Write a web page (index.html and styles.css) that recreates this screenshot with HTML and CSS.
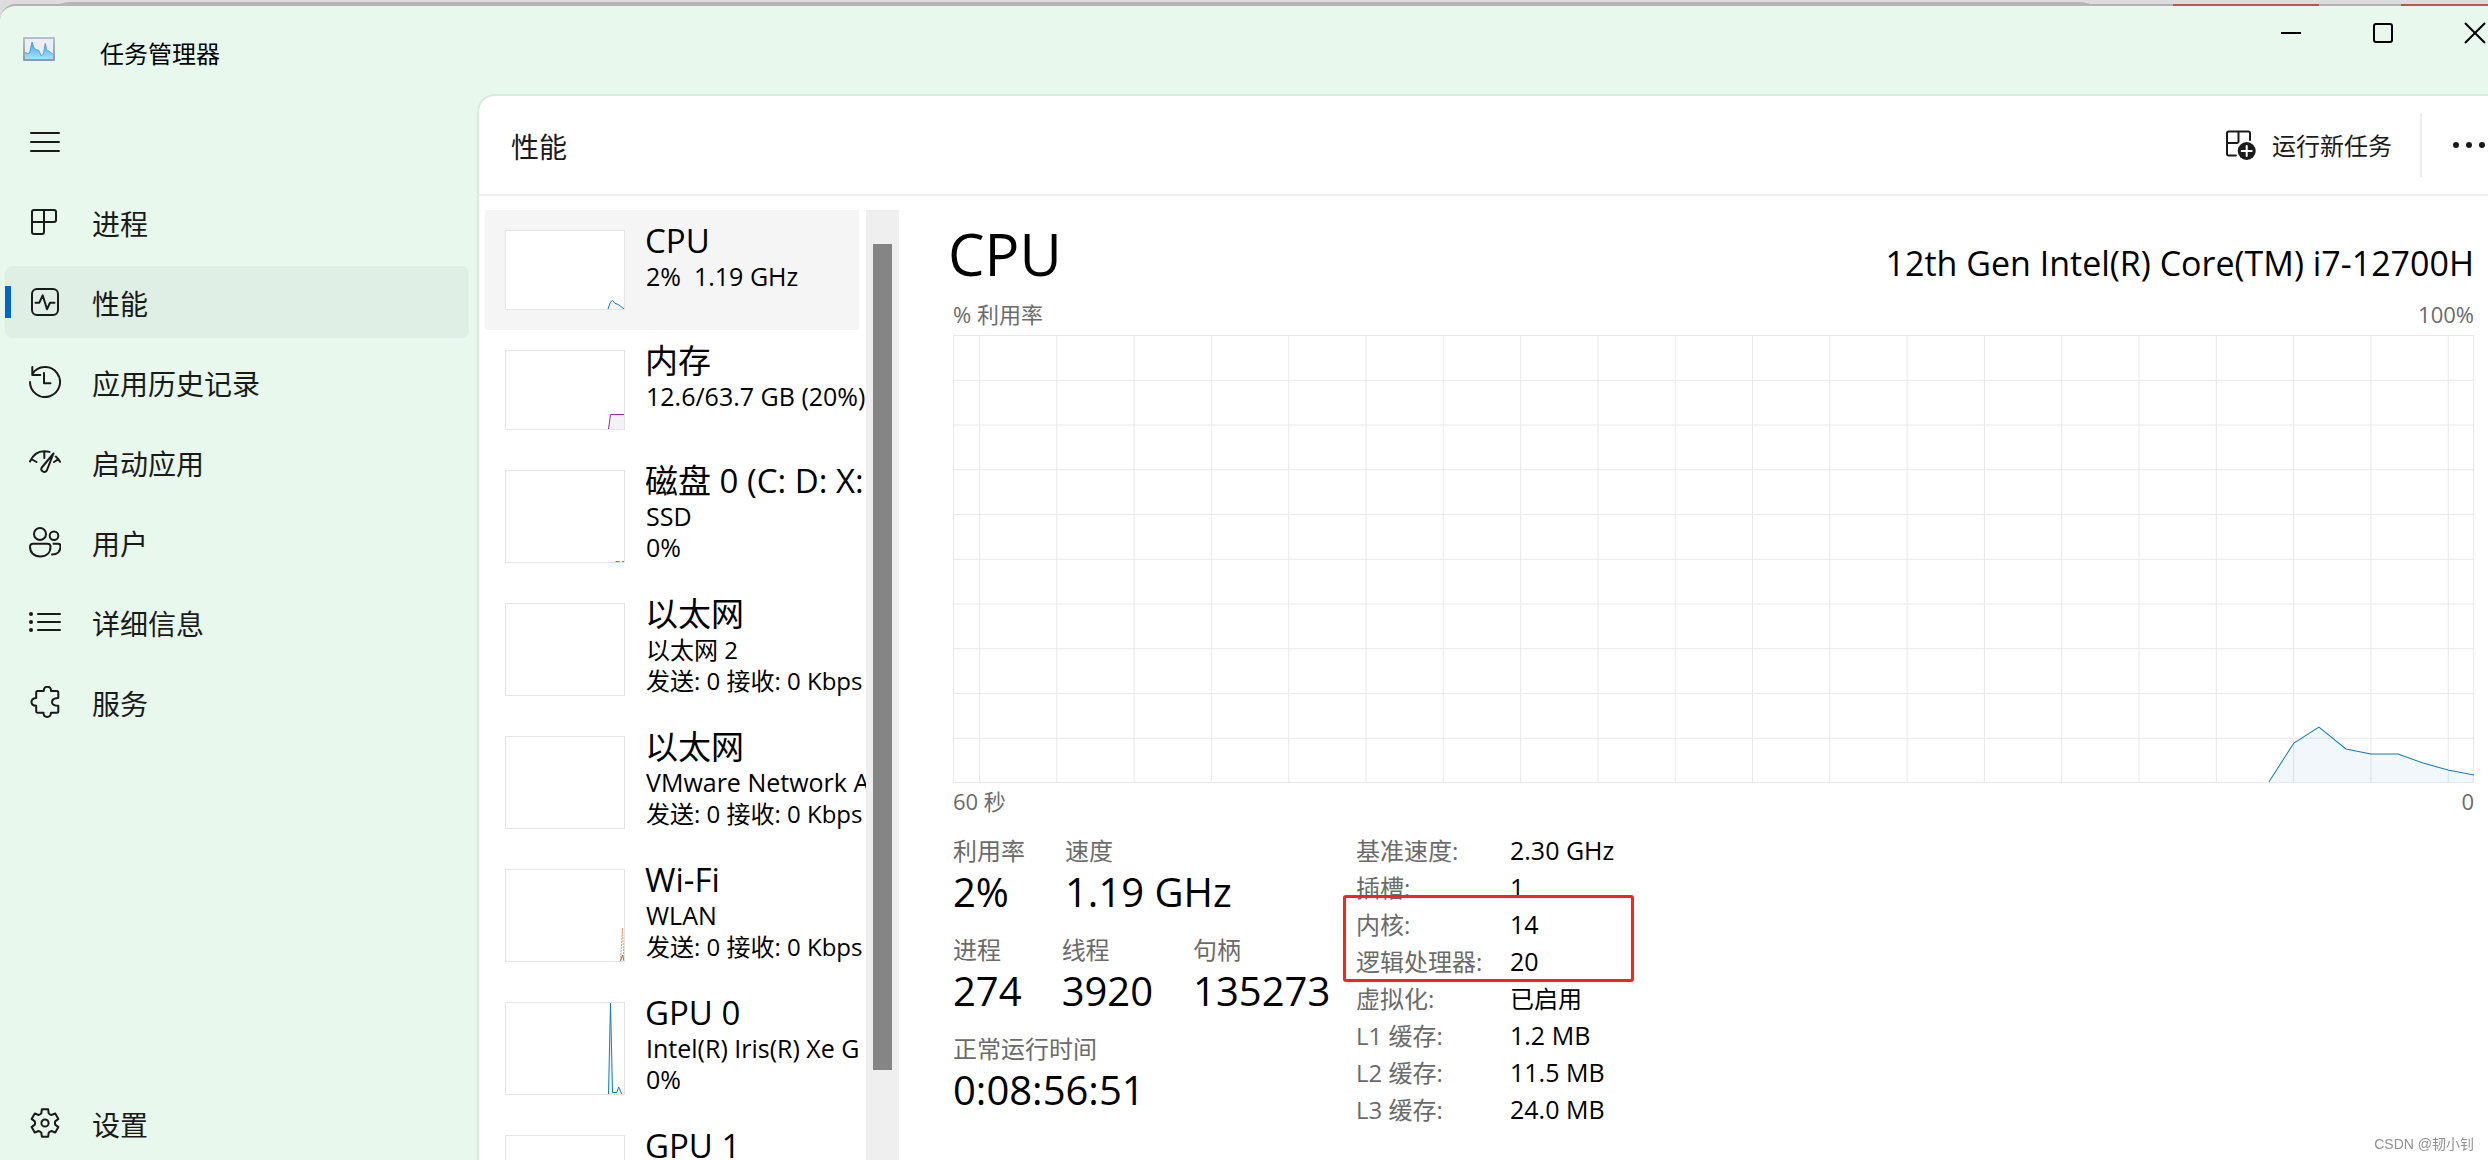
FILE: index.html
```html
<!DOCTYPE html>
<html lang="zh-CN">
<head>
<meta charset="utf-8">
<meta name="viewport" content="width=device-width, initial-scale=1">
<title>任务管理器</title>
<link rel="stylesheet" href="styles.css">
</head>
<body>
<div class="backdrop" aria-hidden="true">
  <span class="backdrop-tab"></span>
  <span class="backdrop-mark"></span>
  <span class="backdrop-mark backdrop-mark-end"></span>
</div>
<div class="window">
  <header class="titlebar">
    <svg class="app-icon" viewBox="0 0 32 24" aria-hidden="true">
      <defs>
        <linearGradient id="app-frame" x1="0" y1="0" x2="0" y2="1"><stop offset="0" stop-color="#b4c0cc"/><stop offset="1" stop-color="#8f99a8"/></linearGradient>
        <linearGradient id="app-fill" x1="0" y1="0" x2="0" y2="1"><stop offset="0" stop-color="#3da5ea"/><stop offset="1" stop-color="#a4e2fb"/></linearGradient>
      </defs>
      <rect width="32" height="24" rx="1" fill="url(#app-frame)"/>
      <rect x="2" y="2" width="28" height="20" fill="#eceef3"/>
      <path d="M2 15.500 5 16.500 6.500 16 9 5l2.300 6.300 2 1.200 2.500.8L18.300 19l2-2 2-10.700L24 13.700l2 .5 4 3V22H2z" fill="url(#app-fill)"/>
      <path d="M2 15.500 5 16.500 6.500 16 9 5l2.300 6.300 2 1.200 2.500.8L18.300 19l2-2 2-10.700L24 13.700l2 .5 4 3" fill="none" stroke="#3a9be0" stroke-width=".8"/>
    </svg>
    <h1 class="app-title">任务管理器</h1>
    <div class="window-controls">
      <button class="window-button" type="button" aria-label="最小化"><svg viewBox="0 0 24 24"><path d="M2 12h20"/></svg></button>
      <button class="window-button" type="button" aria-label="最大化"><svg viewBox="0 0 24 24"><rect x="3" y="3" width="18" height="18" rx="2"/></svg></button>
      <button class="window-button" type="button" aria-label="关闭"><svg viewBox="0 0 24 24"><path d="M2 2l20 20M22 2 2 22"/></svg></button>
    </div>
  </header>

  <div class="body">
    <nav class="sidebar">
      <button class="nav-item nav-menu" type="button" aria-label="菜单"><svg class="icon" viewBox="0 0 32 32"><path d="M2 7h28M2 16h28M2 25h28"/></svg></button>
      <button class="nav-item" type="button"><svg class="icon" viewBox="0 0 32 32"><path d="M5 4h20a2 2 0 0 1 2 2v8a2 2 0 0 1-2 2H15v10a2 2 0 0 1-2 2H5a2 2 0 0 1-2-2V6a2 2 0 0 1 2-2zM15 4v12M3 16h12"/></svg><span>进程</span></button>
      <button class="nav-item nav-selected" type="button" aria-current="page"><svg class="icon" viewBox="0 0 32 32"><rect x="3" y="3" width="26" height="26" rx="5"/><path d="M6.500 16.700h3.800l3.400-7.400L18 23.300l3-6.600h4.500"/></svg><span>性能</span></button>
      <button class="nav-item" type="button"><svg class="icon" viewBox="0 0 32 32"><path d="M1 16A15 15 0 1 0 3.500 7.700M3.300 1v8h8M15 7v10.300h6.500"/></svg><span>应用历史记录</span></button>
      <button class="nav-item" type="button"><svg class="icon" viewBox="0 0 32 32"><path d="M1 15.500C4 9 9 5.300 15 5.300q3 0 5.500.6M3 13.500l4.500 2.500M15.300 6v6M26.800 10.500q2.500 2 4.200 5.300M29.500 13.200 25 16M24.500 7.500 12.800 21.500a2.800 2.800 0 0 0 5 3z"/></svg><span>启动应用</span></button>
      <button class="nav-item" type="button"><svg class="icon" viewBox="0 0 32 32"><circle cx="11" cy="8" r="6"/><circle cx="25" cy="9.700" r="4.300"/><path d="M4 17.700h14.500a3 3 0 0 1 3 3c0 6-4 9.800-10.300 9.800S1 26.500 1 20.700a3 3 0 0 1 3-3zM24.500 17.700H29a2.500 2.500 0 0 1 2.500 2.500c0 5-3 8.300-8.500 8.300"/></svg><span>用户</span></button>
      <button class="nav-item" type="button"><svg class="icon" viewBox="0 0 32 32"><path d="M9 8h22M9 16h22M9 24h22"/><g class="solid"><circle cx="2" cy="8" r="2"/><circle cx="2" cy="16" r="2"/><circle cx="2" cy="24" r="2"/></g></svg><span>详细信息</span></button>
      <button class="nav-item" type="button"><svg class="icon" viewBox="0 0 32 32"><path d="M8.700 5h6.100q-.2-4.200 3.600-4.200T22 5h5.800a1.500 1.500 0 0 1 1.500 1.500V12q-6.300.2-6.300 3.900t6.300 3.900v5.400a1.500 1.500 0 0 1-1.500 1.500H22q-.2 4.200-3.800 4.200t-3.700-4.200H8.700a1.500 1.500 0 0 1-1.500-1.500v-5.400q-4.700-.4-4.700-3.900T7.200 12V6.500A1.500 1.500 0 0 1 8.700 5z"/></svg><span>服务</span></button>
      <button class="nav-item nav-settings" type="button"><svg class="icon" viewBox="-16 -16 32 32"><circle r="3.600"/><path d="M-3.150-13.640H3.150L3.690-9.620Q5-8.300 6.480-8L10.240-9.550 13.390-4.090 10.170-1.610Q9.700 0 10.170 1.610L13.390 4.090 10.240 9.550 6.480 8Q5 8.300 3.690 9.620L3.150 13.640H-3.150L-3.690 9.620Q-5 8.300-6.480 8L-10.240 9.550-13.390 4.090-10.170 1.610Q-9.700 0-10.170-1.610L-13.390-4.090-10.240-9.550-6.480-8Q-5-8.300-3.690-9.620z"/></svg><span>设置</span></button>
    </nav>

    <main class="page">
      <header class="page-header">
        <h2 class="page-title">性能</h2>
        <button class="run-task" type="button">
          <svg class="icon" viewBox="0 0 32 32"><path d="M25 11V4a1.500 1.500 0 0 0-1.500-1.500h-20A1.500 1.500 0 0 0 2 4v21a1.500 1.500 0 0 0 1.500 1.500H11M13.500 2.500v10A1.500 1.500 0 0 1 12 14H2"/><circle class="solid" cx="21.700" cy="22" r="9"/><path class="plus" d="M21.700 17v10M16.700 22h10"/></svg>
          <span>运行新任务</span>
        </button>
        <button class="more" type="button" aria-label="更多选项"><svg viewBox="0 0 32 8"><circle cx="3" cy="4" r="3"/><circle cx="16" cy="4" r="3"/><circle cx="29" cy="4" r="3"/></svg></button>
      </header>

      <div class="performance">
        <ul class="devices">
          <li><button class="device device-selected" type="button">
            <svg class="thumb thumb-blue" viewBox="1 1 118 78"><path class="area" d="M103 79 105 73l2.300-2.700L110 73.300l3.700 1.400L119 79z"/><path d="M103 79 105 73l2.300-2.700L110 73.300l3.700 1.400L119 79"/></svg>
            <span class="device-text"><span class="device-name">CPU</span><span class="device-info" lang="en">2%&nbsp; 1.19 GHz</span></span></button></li>
          <li><button class="device" type="button">
            <svg class="thumb thumb-purple" viewBox="1 1 118 78"><path class="area" d="M103.500 79l2-14.500H119V79z"/><path d="M103.500 79l2-14.500H119"/></svg>
            <span class="device-text"><span class="device-name">内存</span><span class="device-info" lang="en">12.6/63.7 GB (20%)</span></span></button></li>
          <li><button class="device" type="button">
            <svg class="thumb thumb-tall thumb-green" viewBox="1 1 118 91"><path d="M110.500 91.500h4M117 91.500h2"/></svg>
            <span class="device-text"><span class="device-name">磁盘 0 (C: D: X:</span><span class="device-info" lang="en">SSD</span><span class="device-info" lang="en">0%</span></span></button></li>
          <li><button class="device" type="button">
            <svg class="thumb thumb-tall" viewBox="1 1 118 91"></svg>
            <span class="device-text"><span class="device-name">以太网</span><span class="device-info">以太网 2</span><span class="device-info">发送: 0 接收: 0 Kbps</span></span></button></li>
          <li><button class="device" type="button">
            <svg class="thumb thumb-tall" viewBox="1 1 118 91"></svg>
            <span class="device-text"><span class="device-name">以太网</span><span class="device-info" lang="en">VMware Network A</span><span class="device-info">发送: 0 接收: 0 Kbps</span></span></button></li>
          <li><button class="device" type="button">
            <svg class="thumb thumb-tall thumb-orange" viewBox="1 1 118 91"><path class="dotted" d="M115.500 92l2-33 1.500 33"/><path d="M115.500 92l2-6 1.500 6"/></svg>
            <span class="device-text"><span class="device-name">Wi-Fi</span><span class="device-info" lang="en">WLAN</span><span class="device-info">发送: 0 接收: 0 Kbps</span></span></button></li>
          <li><button class="device" type="button">
            <svg class="thumb thumb-tall thumb-blue" viewBox="1 1 118 91"><path class="area" d="M103.500 92l2-92 2 90.500h4.200l2-5.500 3 7z"/><path d="M103.500 92l2-92 2 90.500h4.200l2-5.500 3 7"/></svg>
            <span class="device-text"><span class="device-name">GPU 0</span><span class="device-info" lang="en">Intel(R) Iris(R) Xe G</span><span class="device-info" lang="en">0%</span></span></button></li>
          <li><button class="device" type="button">
            <svg class="thumb thumb-tall" viewBox="1 1 118 91"></svg>
            <span class="device-text"><span class="device-name">GPU 1</span></span></button></li>
        </ul>
        <div class="scrollbar" aria-hidden="true"><div class="scrollbar-thumb"></div></div>

        <section class="cpu">
          <header class="cpu-header"><h3 class="cpu-title">CPU</h3><p class="cpu-model">12th Gen Intel(R) Core(TM) i7-12700H</p></header>
          <div class="axis axis-top"><span>% 利用率</span><span>100%</span></div>
          <svg class="chart" viewBox="0 0 1520 448" preserveAspectRatio="none" role="img" aria-label="CPU 利用率">
            <defs>
              <pattern id="grid-columns" x="26" width="77.250" height="448" patternUnits="userSpaceOnUse"><path d="M.5 0v448"/></pattern>
              <pattern id="grid-rows" width="1520" height="44.750" patternUnits="userSpaceOnUse"><path d="M0 .5h1520"/></pattern>
            </defs>
            <rect width="1520" height="448" fill="url(#grid-columns)"/>
            <rect width="1520" height="448" fill="url(#grid-rows)"/>
            <path class="frame" d="M.5.5h1519v447H.5z"/>
            <path class="usage-area" d="M1315 447l25-39 25-16 27 22 25 5h27l25 9 25 7 26 5v7z"/>
            <path class="usage-line" d="M1315 447l25-39 25-16 27 22 25 5h27l25 9 25 7 26 5"/>
          </svg>
          <div class="axis axis-bottom"><span>60 秒</span><span>0</span></div>

          <div class="facts">
            <div class="counters">
              <dl class="counter-row"><div><dt>利用率</dt><dd>2%</dd></div><div><dt>速度</dt><dd>1.19 GHz</dd></div></dl>
              <dl class="counter-row"><div><dt>进程</dt><dd>274</dd></div><div><dt>线程</dt><dd>3920</dd></div><div><dt>句柄</dt><dd>135273</dd></div></dl>
              <dl class="counter-row"><div><dt>正常运行时间</dt><dd>0:08:56:51</dd></div></dl>
            </div>
            <div class="specs">
              <table>
                <tr><th scope="row">基准速度:</th><td lang="en">2.30 GHz</td></tr>
                <tr><th scope="row">插槽:</th><td lang="en">1</td></tr>
                <tr><th scope="row">内核:</th><td lang="en">14</td></tr>
                <tr><th scope="row">逻辑处理器:</th><td lang="en">20</td></tr>
                <tr><th scope="row">虚拟化:</th><td>已启用</td></tr>
                <tr><th scope="row">L1 缓存:</th><td lang="en">1.2 MB</td></tr>
                <tr><th scope="row">L2 缓存:</th><td lang="en">11.5 MB</td></tr>
                <tr><th scope="row">L3 缓存:</th><td lang="en">24.0 MB</td></tr>
              </table>
              <div class="highlight"></div>
            </div>
          </div>
        </section>
      </div>
    </main>
  </div>
</div>
<div class="watermark">CSDN @韧小钊</div>
</body>
</html>
```

FILE: styles.css
```css
* {
  box-sizing: border-box;
}

body {
  margin: 0;
  height: 100vh;
  overflow: hidden;
  display: flex;
  flex-direction: column;
  background: #dcdcdc;
  color: #000;
  font-family: "Open Sans", "Noto Sans CJK SC", sans-serif;
  font-size: 24px;
}

h1, h2, h3, p, ul, dl, dd {
  margin: 0;
  padding: 0;
  font-weight: 400;
}

button {
  margin: 0;
  padding: 0;
  border: 0;
  background: none;
  color: inherit;
  font: inherit;
  text-align: left;
}

svg {
  display: block;
  flex: none;
}

/* Sliver of the windows behind */
.backdrop {
  flex: none;
  display: flex;
  align-items: flex-end;
  height: 6px;
  margin-bottom: -2px;
  padding-left: 58px;
  position: relative;
  z-index: 1;
}

.backdrop-tab {
  flex: none;
  width: 2034px;
  height: 4px;
  margin-right: 81px;
  border-radius: 14px 14px 0 0 / 4px 4px 0 0;
  background: #b5b5b5;
}

.backdrop-mark {
  flex: none;
  width: 146px;
  height: 2px;
  margin-right: 82px;
  background: #b8584a;
}

.backdrop-mark-end {
  flex: 1;
  margin-right: 0;
}

.window {
  flex: 1;
  min-height: 0;
  display: flex;
  flex-direction: column;
  border-top: 2px solid #b2b2b2;
  border-radius: 16px 0 0 0;
  background: #e8f8ed;
}

.titlebar {
  flex: none;
  display: flex;
  align-items: flex-start;
  height: 88px;
  padding-left: 23px;
}

.app-icon {
  width: 32px;
  height: 24px;
  margin-top: 31px;
}

.app-title {
  margin: 31px 0 0 45px;
  font-size: 24px;
  line-height: 34px;
}

.window-controls {
  display: flex;
  gap: 68px;
  margin: 15px 1px 0 auto;
}

.window-button svg {
  width: 24px;
  height: 24px;
  fill: none;
  stroke: #000;
  stroke-width: 2;
}

.body {
  flex: 1;
  min-height: 0;
  display: flex;
}

.icon {
  width: 32px;
  height: 32px;
  fill: none;
  stroke: #1a1a1a;
  stroke-width: 2;
  stroke-linecap: round;
  stroke-linejoin: round;
}

.icon .solid {
  fill: #1a1a1a;
  stroke: none;
}

.icon .plus {
  stroke: #fff;
}

/* Sidebar */
.sidebar {
  flex: none;
  width: 477px;
  display: flex;
  flex-direction: column;
  gap: 8px;
  padding: 12px 8px 1px 5px;
  color: #1a1a1a;
}

.nav-item {
  display: flex;
  align-items: center;
  gap: 31px;
  height: 72px;
  padding-left: 24px;
  border-radius: 8px;
  font-size: 28px;
}

.nav-item span {
  padding-top: 2px;
}

.nav-selected {
  background: linear-gradient(#0067c0, #0067c0) 0 20px / 6px 32px no-repeat #e0efe5;
}

.nav-settings {
  margin-top: auto;
}

/* Content page */
.page {
  flex: 1;
  min-width: 0;
  display: flex;
  flex-direction: column;
  border: solid #d9ebdf;
  border-width: 2px 0 0 2px;
  border-radius: 18px 0 0 0;
  background: #fff;
}

.page-header {
  flex: none;
  display: flex;
  align-items: center;
  height: 100px;
  padding: 0 3px 0 32px;
  border-bottom: 2px solid #efefef;
  color: #1a1a1a;
}

.page-title {
  flex: 1;
  padding-top: 2px;
  font-size: 28px;
}

.run-task {
  display: flex;
  align-items: center;
  gap: 15px;
  height: 64px;
  padding-right: 28px;
  border-right: 2px solid #ececec;
}

.run-task span {
  padding-bottom: 2px;
}

.more {
  padding-left: 31px;
}

.more svg {
  width: 32px;
  height: 8px;
  fill: #1a1a1a;
}

.performance {
  flex: 1;
  min-height: 0;
  display: flex;
  padding-top: 14px;
}

/* Device list */
.devices {
  flex: none;
  width: 387px;
  overflow: hidden;
  padding: 0 7px 0 6px;
  list-style: none;
}

.device {
  display: flex;
  width: 100%;
  padding: 20px 0 20px 20px;
  white-space: nowrap;
}

.device-selected {
  background: #f5f5f5;
}

.thumb {
  width: 120px;
  height: 80px;
  border: 1px solid #e4e4e4;
  background: #fff;
  fill: none;
  stroke-width: 1;
}

.thumb-tall {
  height: 93px;
}

.thumb-blue {
  stroke: #117dbb;
}

.thumb-purple {
  stroke: #9528b4;
}

.thumb-green {
  stroke: #4da60c;
}

.thumb-orange {
  stroke: #c0662c;
}

.thumb .area {
  fill: #f1f3f7;
  stroke: none;
}

.thumb .dotted {
  stroke: #ee9470;
  stroke-dasharray: 2 1;
}

.device-text {
  display: flex;
  flex-direction: column;
  height: 80px;
  margin: -9px 0 0 20px;
}

.device-name {
  font-size: 33px;
  line-height: 40px;
}

.device-info {
  padding-left: 1px;
  font-size: 24px;
  line-height: 31px;
}

.device-info:lang(en) {
  font-size: 25px;
}

.scrollbar {
  flex: none;
  width: 33px;
  padding: 34px 7px 90px;
  background: #efefef;
}

.scrollbar-thumb {
  height: 100%;
  background: #858585;
}

/* CPU details */
.cpu {
  flex: 1;
  min-width: 0;
  padding: 0 14px 0 54px;
}

.cpu-header {
  display: flex;
  justify-content: space-between;
  align-items: baseline;
  margin-left: -5px;
}

.cpu-title {
  font-size: 58px;
  line-height: 88px;
}

.cpu-model {
  font-size: 34px;
}

.axis {
  display: flex;
  justify-content: space-between;
  color: #6b6b6b;
  font-size: 22px;
}

.axis-top {
  padding-bottom: 4px;
  line-height: 33px;
}

.axis-bottom {
  line-height: 37px;
}

.chart {
  width: 100%;
  height: 448px;
  fill: none;
  stroke: #e8e8e8;
  stroke-width: 1;
}

.chart rect {
  stroke: none;
}

.chart .usage-area {
  fill: #117dbb;
  fill-opacity: 0.06;
  stroke: none;
}

.chart .usage-line {
  stroke: #117dbb;
}

.facts {
  display: flex;
  margin-top: 14px;
}

.counters {
  flex: none;
  width: 403px;
  display: flex;
  flex-direction: column;
  gap: 17px;
}

.counter-row {
  display: flex;
  gap: 40px;
}

.counter-row dt {
  color: #6b6b6b;
  line-height: 34px;
}

.counter-row dd {
  font-size: 40px;
  line-height: 48px;
}

.specs {
  position: relative;
  margin-top: -2px;
}

.specs table {
  border-collapse: collapse;
}

.specs th,
.specs td {
  padding: 0;
  font-weight: 400;
  line-height: 37px;
  text-align: left;
}

.specs th {
  width: 154px;
  color: #6b6b6b;
}

.specs td:lang(en) {
  font-size: 25px;
}

.highlight {
  position: absolute;
  top: 63px;
  left: -13px;
  width: 291px;
  height: 87px;
  border: 3px solid #ff2314;
  border-radius: 3px;
}

.watermark {
  position: fixed;
  right: 14px;
  bottom: 4px;
  color: #909090;
  font: 14px/24px "Liberation Sans", "Noto Sans CJK SC", sans-serif;
}
```
